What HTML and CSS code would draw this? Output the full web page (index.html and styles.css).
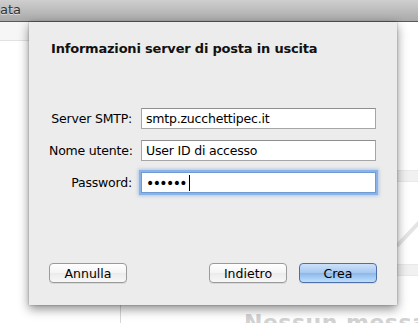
FILE: index.html
```html
<!DOCTYPE html>
<html lang="it">

<head>
    <meta charset="UTF-8" />
    <title>Server di posta in uscita</title>
    <link rel="stylesheet" href="styles.css">
</head>

<body>
    <div class="titlebar"><span class="wintitle">ata</span></div>
    <div class="window">
        <div class="sidebar">
            <div class="sidebar-top"></div>
        </div>
        <div class="content">
            <div class="band band-one"></div>
            <svg class="envelope" width="30" height="40" viewBox="0 0 30 40">
                <path d="M0 38 L30 6" stroke="#e4e4e4" stroke-width="4" fill="none" />
            </svg>
            <div class="band band-two"></div>
            <div class="empty">Nessun messaggio</div>
        </div>
    </div>

    <div class="sheet">
        <h2 class="sheet-title">Informazioni server di posta in uscita</h2>
        <form class="fields">
            <label for="smtp">Server SMTP:</label>
            <input id="smtp" type="text" value="smtp.zucchettipec.it">
            <label for="user">Nome utente:</label>
            <input id="user" type="text" value="User ID di accesso">
            <label for="pass">Password:</label>
            <div class="input focused">&bull;&bull;&bull;&bull;&bull;&bull;<span class="caret"></span></div>
        </form>
        <div class="buttons">
            <button class="btn">Annulla</button>
            <span class="spacer"></span>
            <button class="btn">Indietro</button>
            <button class="btn primary">Crea</button>
        </div>
    </div>
</body>

</html>
```

FILE: styles.css
```css
* {
    padding: 0;
    margin: 0;
    box-sizing: border-box;
}

body {
    width: 418px;
    height: 323px;
    overflow: hidden;
    position: relative;
    background: #fff;
    font-family: "DejaVu Sans", sans-serif;
    font-size: 12px;
    color: #111;
}

.titlebar {
    height: 22px;
    background: linear-gradient(#cfcfcf, #a9a9a9);
    border-bottom: 1px solid #595959;
}

.wintitle {
    display: block;
    line-height: 20px;
    font-size: 13px;
    color: #333;
    text-shadow: 0 1px 0 #ddd;
}

.window {
    display: grid;
    grid-template-columns: 121px 1fr;
    height: 301px;
}

.sidebar {
    border-right: 1px solid #d6d6d6;
}

.sidebar-top {
    height: 19px;
    background: #f6f6f6;
    border-bottom: 1px solid #e2e2e2;
}

.content {
    position: relative;
    display: flex;
    flex-direction: column;
    padding-top: 148px;
}

.band {
    height: 12px;
    background: #f1f1f1;
    border-top: 1px solid #e9e9e9;
    border-bottom: 1px solid #e9e9e9;
}

.envelope {
    margin: 26px 0 0 276px;
    width: 30px;
    height: 40px;
}

.band-two {
    margin-top: 16px;
}

.empty {
    margin: 34px 0 0 123px;
    font-size: 22px;
    font-weight: bold;
    line-height: 26px;
    color: #d2d2d2;
    white-space: nowrap;
    letter-spacing: 0.5px;
}

.sheet {
    position: absolute;
    left: 29px;
    top: 22px;
    width: 368px;
    height: 283px;
    background: #ececec;
    box-shadow: 0 4px 10px rgba(0, 0, 0, 0.45), 0 0 2px rgba(0, 0, 0, 0.3);
    padding: 19px 20px 0 20px;
}

.sheet-title {
    font-size: 13px;
    font-weight: bold;
    margin-left: 2px;
    letter-spacing: -0.2px;
    color: #111;
}

.fields {
    display: grid;
    grid-template-columns: 83px 235px;
    column-gap: 9px;
    row-gap: 11px;
    align-items: center;
    margin-top: 52px;
}

.fields label {
    text-align: right;
    font-size: 12.5px;
    white-space: nowrap;
    letter-spacing: -0.2px;
    color: #000;
}

.fields input,
.input {
    height: 21px;
    border: 1px solid #a6a6a6;
    border-top-color: #8e8e8e;
    background: #fff;
    font-family: inherit;
    font-size: 12.5px;
    padding: 0 4px;
    color: #000;
    letter-spacing: -0.2px;
    outline: none;
}

.input {
    display: flex;
    align-items: center;
    font-size: 14px;
    letter-spacing: -1.6px;
}

.focused {
    border-color: #6f9bd3;
    box-shadow: 0 0 0 2px #8ab4e8, 0 0 3px 3px rgba(120, 165, 225, 0.5);
}

.caret {
    width: 1px;
    height: 16px;
    background: #000;
    margin-left: 3px;
}

.buttons {
    display: flex;
    gap: 12px;
    margin-top: 70px;
}

.spacer {
    flex: 1;
}

.btn {
    width: 78px;
    height: 20px;
    border: 1px solid #9a9a9a;
    border-radius: 4px;
    background: linear-gradient(#ffffff, #f4f4f4 50%, #ebebeb 51%, #f8f8f8);
    font-family: inherit;
    font-size: 12.5px;
    color: #000;
    box-shadow: 0 1px 0 rgba(0, 0, 0, 0.08);
}

.primary {
    border-color: #4d6ea8;
    background: linear-gradient(#cde1f8, #a5c8f0 50%, #8ab7eb 51%, #bfe0fb);
}
```
